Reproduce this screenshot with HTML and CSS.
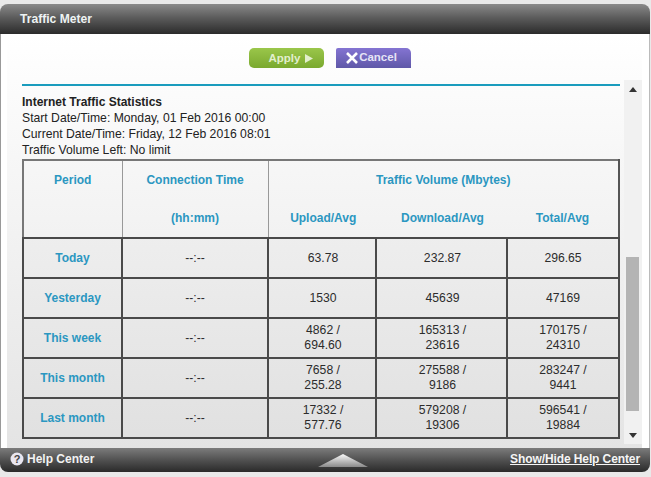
FILE: index.html
```html
<!DOCTYPE html>
<html lang="en">
<head>
<meta charset="utf-8">
<title>Traffic Meter</title>
<link rel="stylesheet" href="styles.css">
</head>
<body>
<div class="window">
  <header class="titlebar">Traffic Meter</header>
  <main class="panel">
    <div class="inner">
      <div class="actions">
        <button class="btn btn-apply">Apply <svg class="play" width="8" height="9" viewBox="0 0 8 9"><path d="M0 0L8 4.5L0 9Z" fill="#e2efcd"/></svg></button>
        <button class="btn btn-cancel"><svg class="cross" width="12" height="12" viewBox="0 0 12 12"><path d="M1 1L11 11M11 1L1 11" stroke="#fff" stroke-width="2.6"/></svg><span class="cancel-label">Cancel</span></button>
      </div>
      <div class="body">
        <div class="content">
          <div class="rule"></div>
          <div class="stats">
            <div class="stats-title">Internet Traffic Statistics</div>
            <div>Start Date/Time: Monday, 01 Feb 2016 00:00</div>
            <div>Current Date/Time: Friday, 12 Feb 2016 08:01</div>
            <div>Traffic Volume Left: No limit</div>
          </div>
          <table class="traffic">
            <colgroup><col class="c1"><col class="c2"><col class="c3"><col class="c4"><col class="c5"></colgroup>
            <thead>
              <tr class="h1">
                <th rowspan="2" class="top">Period</th>
                <th>Connection Time</th>
                <th colspan="3">Traffic Volume (Mbytes)</th>
              </tr>
              <tr class="h2">
                <th>(hh:mm)</th><th class="open nudge">Upload/Avg</th><th class="open nudge">Download/Avg</th><th class="open">Total/Avg</th>
              </tr>
            </thead>
            <tbody>
              <tr><th>Today</th><td>--:--</td><td class="nudge">63.78</td><td class="nudge">232.87</td><td>296.65</td></tr>
              <tr><th>Yesterday</th><td>--:--</td><td class="nudge">1530</td><td class="nudge">45639</td><td>47169</td></tr>
              <tr><th>This week</th><td>--:--</td><td class="nudge">4862 /<br>694.60</td><td class="nudge">165313 /<br>23616</td><td>170175 /<br>24310</td></tr>
              <tr><th>This month</th><td>--:--</td><td class="nudge">7658 /<br>255.28</td><td class="nudge">275588 /<br>9186</td><td>283247 /<br>9441</td></tr>
              <tr><th>Last month</th><td>--:--</td><td class="nudge">17332 /<br>577.76</td><td class="nudge">579208 /<br>19306</td><td>596541 /<br>19884</td></tr>
            </tbody>
          </table>
        </div>
        <div class="scrollbar">
          <span class="arrow-up"></span>
          <span class="thumb"></span>
          <span class="arrow-down"></span>
        </div>
      </div>
    </div>
  </main>
  <footer class="footer">
    <span class="help"><svg width="14" height="14" viewBox="0 0 14 14"><circle cx="7" cy="7" r="6.5" fill="#e9e6f0"/><text x="7" y="11" text-anchor="middle" class="qmark">?</text></svg>Help Center</span>
    <svg class="peak" width="50" height="14" viewBox="0 0 50 14"><defs><linearGradient id="pk" x1="0" y1="0" x2="0" y2="1"><stop offset="0" stop-color="#fafafa"/><stop offset="1" stop-color="#8a8a8a"/></linearGradient></defs><path d="M0 14L25 1L50 14Z" fill="url(#pk)"/></svg>
    <a class="toggle" href="#">Show/Hide Help Center</a>
  </footer>
</div>
</body>
</html>
```
FILE: styles.css
```css
html, body { margin: 0; padding: 0; }
body {
  width: 651px;
  height: 477px;
  overflow: hidden;
  background: #e9e9e9;
  font-family: "Liberation Sans", Arial, sans-serif;
  font-size: 12.2px;
  color: #222;
}
.window {
  width: 650px;
  padding-top: 4px;
  display: flex;
  flex-direction: column;
}
.titlebar {
  height: 30px;
  box-sizing: border-box;
  padding: 8px 0 0 20px;
  background: linear-gradient(#8a8a8a, #5c5c5c 45%, #2b2b2b);
  border-radius: 8px 8px 0 0;
  color: #eef3f3;
  font-size: 12.1px;
  font-weight: bold;
  line-height: 14px;
}
.panel {
  height: 414px;
  box-sizing: border-box;
  background: #fff;
  border-left: 1px solid #999;
  border-right: 1px solid #bbb;
  padding-left: 6px;
  overflow: hidden;
}
.inner {
  width: 635px;
  height: 414px;
  background: linear-gradient(#fff, #e4e4e4);
}
.actions {
  display: flex;
  justify-content: center;
  gap: 12px;
  padding: 14px 0 0 0;
  height: 32px;
  margin-left: 11px;
}
.btn {
  width: 75px;
  height: 20px;
  border: 0;
  padding: 0;
  font: bold 11.5px/18px "Liberation Sans", Arial, sans-serif;
  display: flex;
  align-items: center;
  justify-content: center;
  box-sizing: border-box;
}
.btn-apply {
  background: linear-gradient(#9ac64a, #7aa92f);
  border-radius: 5px;
  color: #e2efcd;
  gap: 5px;
  padding-left: 9px;
}
.btn-cancel {
  background: linear-gradient(#8474d2, #5f58a8);
  border-radius: 2px 5px 0 0;
  color: #e6e4f6;
  gap: 1px;
  padding-right: 4px;
}
.cancel-label { position: relative; top: -1px; }
.body {
  display: flex;
  height: 368px;
}
.content {
  width: 598px;
  margin-left: 15px;
  flex: none;
}
.rule {
  height: 2px;
  margin-top: 4px;
  background: #1a9cbd;
}
.stats {
  padding-top: 8px;
  line-height: 16px;
}
.stats-title { font-weight: bold; font-size: 12px; }
.traffic {
  width: 596px;
  margin-top: 1px;
  border-collapse: collapse;
  table-layout: fixed;
  text-align: center;
  font-size: 12.2px;
}
.c1 { width: 99px; }
.c2 { width: 146px; }
.c3 { width: 108px; }
.c4 { width: 131px; }
.c5 { width: 112px; }
.traffic th, .traffic td {
  padding: 0;
  border: 2px solid #4a4a4a;
  line-height: 15px;
}
.traffic th { color: #2b97c1; font-weight: bold; font-size: 12px; }
.traffic td { color: #2c2c2c; }
.traffic thead th { border: 1px solid #999; font-weight: bold; height: 38px; }
.traffic thead { border: 2px solid #777; border-right-color: #555; border-bottom: 2px solid #4a4a4a; }
.traffic .h1 th { border-bottom: 0; }
.traffic .h2 th { border-top: 0; }
.traffic thead th.top { vertical-align: top; padding-top: 12px; height: auto; }
.traffic thead th.open { border-left: 0; border-right: 0; }
.traffic .nudge { padding-left: 2px; }
.traffic tbody tr { height: 40px; background: rgba(0, 0, 0, 0.015); }
.scrollbar {
  width: 18px;
  margin-left: 4px;
  height: 364px;
  background: #f1f1f1;
  position: relative;
  flex: none;
}
.arrow-up, .arrow-down {
  position: absolute;
  left: 5px;
  border-left: 4px solid transparent;
  border-right: 4px solid transparent;
}
.arrow-up { top: 7px; border-bottom: 5px solid #333; }
.arrow-down { bottom: 6px; border-top: 5px solid #333; }
.thumb {
  position: absolute;
  left: 2px;
  width: 13px;
  top: 177px;
  height: 154px;
  background: #b4b4b4;
}
.footer {
  height: 24px;
  box-sizing: border-box;
  background: linear-gradient(#7c7c7c, #555 45%, #2a2a2a);
  border-radius: 0 0 8px 8px;
  color: #f2f2f2;
  font-weight: bold;
  font-size: 12px;
  display: flex;
  align-items: center;
  justify-content: space-between;
  padding: 0 10px 3px 10px;
  position: relative;
  line-height: 14px;
}
.help { display: flex; align-items: center; gap: 3px; }
.qmark { font: bold 11px "Liberation Sans", Arial, sans-serif; fill: #444; }
.peak { position: absolute; left: 318px; bottom: 5px; }
.toggle { color: #f5f5f5; text-decoration: underline; letter-spacing: -0.1px; }
```
